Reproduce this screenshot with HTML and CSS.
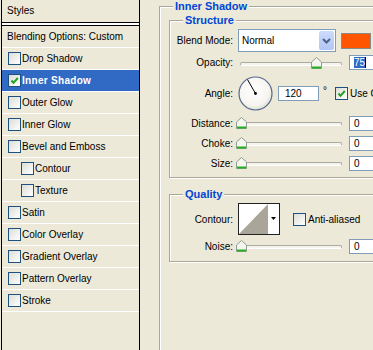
FILE: index.html
```html
<!DOCTYPE html>
<html>
<head>
  <title>Layer Style</title>
  <link rel="stylesheet" href="styles.css">
</head>
<body>
  <div class="dialog">
    <div class="styles-panel">
      <div class="styles-head">Styles</div>
      <div class="split"></div>
      <ul class="style-list">
        <li class="item plain">Blending Options: Custom</li>
        <li class="item"><span class="check"></span>Drop Shadow</li>
        <li class="item selected"><span class="check"><svg width="11" height="11" viewBox="0 0 11 11"><path d="M2.5 5.5 L4.5 7.8 L8.8 3" fill="none" stroke="#21A121" stroke-width="2"/></svg></span>Inner Shadow</li>
        <li class="item"><span class="check"></span>Outer Glow</li>
        <li class="item"><span class="check"></span>Inner Glow</li>
        <li class="item"><span class="check"></span>Bevel and Emboss</li>
        <li class="item sub"><span class="check"></span>Contour</li>
        <li class="item sub"><span class="check"></span>Texture</li>
        <li class="item"><span class="check"></span>Satin</li>
        <li class="item"><span class="check"></span>Color Overlay</li>
        <li class="item"><span class="check"></span>Gradient Overlay</li>
        <li class="item"><span class="check"></span>Pattern Overlay</li>
        <li class="item"><span class="check"></span>Stroke</li>
      </ul>
    </div>

    <div class="settings">
      <fieldset class="group outer">
        <legend>Inner Shadow</legend>

        <fieldset class="group structure">
          <legend>Structure</legend>
          <div class="row blend-row">
            <span class="label">Blend Mode:</span>
            <div class="combo">
              <span class="combo-text">Normal</span>
              <span class="combo-btn"><svg width="9" height="6" viewBox="0 0 9 6"><path d="M1 1 L4.5 4.5 L8 1" fill="none" stroke="#4D6185" stroke-width="2"/></svg></span>
            </div>
            <span class="swatch"></span>
          </div>
          <div class="row slider-row">
            <span class="label">Opacity:</span>
            <div class="slider">
              <span class="track"></span>
              <span class="thumb" style="left: 75%"><svg width="11" height="12" viewBox="0 0 11 12"><path d="M0.5 5 L5.5 0.5 L10.5 5 V11.5 H0.5 Z" fill="#F5F5F0" stroke="#8F9C8F"/><path d="M1 10.5 H10" stroke="#24B024" stroke-width="2"/></svg></span>
            </div>
            <span class="field"><span class="sel">75</span></span>
          </div>
          <div class="row angle-row">
            <span class="label">Angle:</span>
            <svg class="dial" width="35" height="35" viewBox="0 0 35 35">
              <defs>
                <radialGradient id="dialFill" cx="45%" cy="40%" r="65%">
                  <stop offset="0" stop-color="#ffffff"/>
                  <stop offset="0.7" stop-color="#F6F5F0"/>
                  <stop offset="1" stop-color="#D9D8CE"/>
                </radialGradient>
              </defs>
              <circle cx="17.5" cy="17.5" r="16.5" fill="url(#dialFill)" stroke="#56678C" stroke-width="1.2"/>
              <line x1="17.5" y1="17.5" x2="9.5" y2="3.6" stroke="#000" stroke-width="1"/>
              <circle cx="17.5" cy="17.5" r="1.4" fill="#000"/>
            </svg>
            <span class="field angle-field">120</span>
            <span class="degree">°</span>
            <span class="check global"><svg width="11" height="11" viewBox="0 0 11 11"><path d="M2.5 5.5 L4.5 7.8 L8.8 3" fill="none" stroke="#21A121" stroke-width="2"/></svg></span>
            <span class="check-text">Use Global Light</span>
          </div>
          <div class="row slider-row small">
            <span class="label">Distance:</span>
            <div class="slider">
              <span class="track"></span>
              <span class="thumb" style="left: 0%"><svg width="11" height="12" viewBox="0 0 11 12"><path d="M0.5 5 L5.5 0.5 L10.5 5 V11.5 H0.5 Z" fill="#F5F5F0" stroke="#8F9C8F"/><path d="M1 10.5 H10" stroke="#24B024" stroke-width="2"/></svg></span>
            </div>
            <span class="field">0</span>
          </div>
          <div class="row slider-row small">
            <span class="label">Choke:</span>
            <div class="slider">
              <span class="track"></span>
              <span class="thumb" style="left: 0%"><svg width="11" height="12" viewBox="0 0 11 12"><path d="M0.5 5 L5.5 0.5 L10.5 5 V11.5 H0.5 Z" fill="#F5F5F0" stroke="#8F9C8F"/><path d="M1 10.5 H10" stroke="#24B024" stroke-width="2"/></svg></span>
            </div>
            <span class="field">0</span>
          </div>
          <div class="row slider-row small">
            <span class="label">Size:</span>
            <div class="slider">
              <span class="track"></span>
              <span class="thumb" style="left: 0%"><svg width="11" height="12" viewBox="0 0 11 12"><path d="M0.5 5 L5.5 0.5 L10.5 5 V11.5 H0.5 Z" fill="#F5F5F0" stroke="#8F9C8F"/><path d="M1 10.5 H10" stroke="#24B024" stroke-width="2"/></svg></span>
            </div>
            <span class="field">0</span>
          </div>
        </fieldset>

        <fieldset class="group quality">
          <legend>Quality</legend>
          <div class="row contour-row">
            <span class="label">Contour:</span>
            <div class="contour">
              <svg width="29" height="30" viewBox="0 0 29 30"><polygon points="0,30 29,0 29,30" fill="#A9A598"/></svg>
              <span class="contour-arrow"><svg width="5" height="3" viewBox="0 0 5 3"><polygon points="0,0 5,0 2.5,3" fill="#000"/></svg></span>
            </div>
            <span class="check anti"></span>
            <span class="check-text">Anti-aliased</span>
          </div>
          <div class="row slider-row noise-row">
            <span class="label">Noise:</span>
            <div class="slider">
              <span class="track"></span>
              <span class="thumb" style="left: 0%"><svg width="11" height="12" viewBox="0 0 11 12"><path d="M0.5 5 L5.5 0.5 L10.5 5 V11.5 H0.5 Z" fill="#F5F5F0" stroke="#8F9C8F"/><path d="M1 10.5 H10" stroke="#24B024" stroke-width="2"/></svg></span>
            </div>
            <span class="field">0</span>
          </div>
        </fieldset>
      </fieldset>
    </div>
  </div>
</body>
</html>
```

FILE: styles.css
```css
body {
  margin: 0;
  background: #ECE9D8;
  font-family: "Liberation Sans", Arial, sans-serif;
  font-size: 10px;
  color: #000;
  overflow: hidden;
}

.dialog {
  display: flex;
  align-items: flex-start;
  width: 600px;
}

/* left list of effects */

.styles-panel {
  flex: none;
  width: 137px;
  height: 360px;
  margin-left: 1px;
  border-left: 1px solid #000;
  border-right: 1px solid #000;
}

.styles-head {
  height: 22px;
  line-height: 22px;
  padding-left: 5px;
}

.split {
  height: 2px;
  background: #fff;
  border-top: 1px solid #000;
  border-bottom: 1px solid #000;
}

.style-list {
  list-style: none;
  margin: 0;
  padding: 0;
}

.item {
  display: flex;
  align-items: center;
  height: 21px;
  border-bottom: 1px solid #fff;
  padding-left: 6px;
  white-space: nowrap;
}

.item.plain {
  padding-left: 5px;
}

.item.sub {
  padding-left: 19px;
}

.item.selected {
  background: #316AC5;
  color: #fff;
  font-weight: bold;
  letter-spacing: 0.3px;
}

.check {
  flex: none;
  display: flex;
  width: 11px;
  height: 11px;
  margin-right: 1px;
  border: 1px solid #1C5180;
  background: linear-gradient(135deg, #DCDCD7, #fff);
}

/* right side */

.settings {
  flex: none;
  width: 420px;
  margin-left: 19px;
}

.group {
  margin: 0;
  padding: 0;
  min-width: 0;
  border: 1px solid #ACA899;
  box-shadow: inset 1px 1px #fff, 1px 1px #fff;
}

.group legend {
  padding: 0 2px;
  margin-left: 13px;
  font-size: 11px;
  font-weight: bold;
  line-height: 13px;
  color: #0046D5;
  background: #ECE9D8;
}

.outer {
  height: 400px;
  padding-left: 9px;
}

.outer > legend {
  margin-left: 4px;
}

.structure {
  margin-top: 1px;
  padding-bottom: 4px;
}

.quality {
  margin-top: 10px;
  padding-bottom: 4px;
}

.row {
  display: flex;
  align-items: center;
  white-space: nowrap;
}

.label {
  flex: none;
  width: 63px;
  margin-right: 5px;
  text-align: right;
}

.blend-row {
  height: 23px;
  margin-top: 2px;
}

.combo {
  display: flex;
  align-items: center;
  justify-content: space-between;
  width: 96px;
  height: 21px;
  border: 1px solid #7F9DB9;
  background: #fff;
}

.combo-text {
  padding-left: 3px;
}

.combo-btn {
  display: flex;
  align-items: center;
  justify-content: center;
  width: 15px;
  height: 19px;
  margin-right: 1px;
  border-radius: 2px;
  background: linear-gradient(#CCDBFC, #B2C6F5);
}

.swatch {
  width: 28px;
  height: 14px;
  margin-left: 5px;
  border: 1px solid #8A8A86;
  background: #FF5500;
}

.slider-row {
  height: 21px;
}

.slider-row.small {
  height: 20px;
}

.noise-row {
  height: 22px;
}

.slider {
  position: relative;
  flex: none;
  width: 100px;
  height: 12px;
  margin: 0 8px 0 3px;
}

.track {
  position: absolute;
  left: -1px;
  right: -1px;
  top: 5px;
  height: 2px;
  border: 1px solid #ACABA0;
  border-bottom-color: #fff;
  border-radius: 2px;
  background: #F4F3EE;
}

.thumb {
  position: absolute;
  top: 0;
  margin-left: -5px;
  display: flex;
}

.field {
  flex: none;
  width: 40px;
  height: 13px;
  line-height: 13px;
  padding-left: 4px;
  border: 1px solid #7F9DB9;
  background: #fff;
}

.sel {
  display: inline-block;
  line-height: 11px;
  background: #316AC5;
  color: #fff;
  border-right: 1px solid #000;
}

.angle-row {
  height: 40px;
}

.dial {
  flex: none;
  margin-right: 5px;
}

.angle-field {
  width: 35px;
  padding-left: 6px;
  width: 33px;
}

.degree {
  margin-left: 4px;
  align-self: flex-start;
  margin-top: 12px;
}

.check.global {
  margin-left: 8px;
}

.check-text {
  margin-left: 1px;
}

.contour-row {
  height: 32px;
  margin-top: 2px;
}

.contour {
  display: flex;
  width: 40px;
  height: 30px;
  border: 1px solid #222;
  background: #fff;
}

.contour-arrow {
  flex: 1;
  display: flex;
  justify-content: center;
  padding-top: 13px;
}

.check.anti {
  margin-left: 13px;
}
```
